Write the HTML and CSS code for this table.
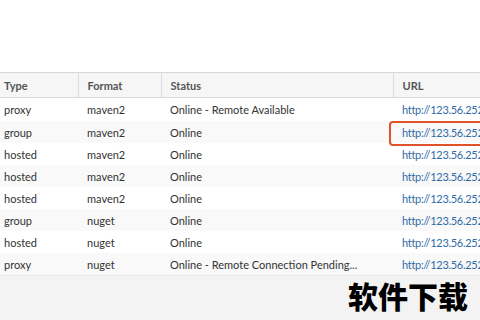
FILE: index.html
```html
<!DOCTYPE html>
<html lang="en">
<head>
  <meta charset="UTF-8" />
  <title>Repositories</title>
  <link rel="stylesheet" href="styles.css">
</head>
<body>

  <div class="topspace"></div>

  <div class="grid-wrap">
    <table class="repos">
      <colgroup>
        <col class="c-type">
        <col class="c-format">
        <col class="c-status">
        <col class="c-url">
      </colgroup>
      <thead>
        <tr>
          <th>Type</th>
          <th>Format</th>
          <th>Status</th>
          <th>URL</th>
        </tr>
      </thead>
      <tbody>
        <tr><td>proxy</td><td>maven2</td><td>Online - Remote Available</td><td class="url">http://123.56.252.18:8081/repository/maven-central/</td></tr>
        <tr><td>group</td><td>maven2</td><td>Online</td><td class="url picked"><span class="mark"></span>http://123.56.252.18:8081/repository/maven-public/</td></tr>
        <tr><td>hosted</td><td>maven2</td><td>Online</td><td class="url">http://123.56.252.18:8081/repository/maven-releases/</td></tr>
        <tr><td>hosted</td><td>maven2</td><td>Online</td><td class="url">http://123.56.252.18:8081/repository/maven-snapshots/</td></tr>
        <tr><td>hosted</td><td>maven2</td><td>Online</td><td class="url">http://123.56.252.18:8081/repository/thirdparty/</td></tr>
        <tr><td>group</td><td>nuget</td><td>Online</td><td class="url">http://123.56.252.18:8081/repository/nuget-group/</td></tr>
        <tr><td>hosted</td><td>nuget</td><td>Online</td><td class="url">http://123.56.252.18:8081/repository/nuget-hosted/</td></tr>
        <tr><td>proxy</td><td>nuget</td><td>Online - Remote Connection Pending...</td><td class="url">http://123.56.252.18:8081/repository/nuget.org-proxy/</td></tr>
      </tbody>
    </table>
  </div>

  <div class="watermark">软件下载</div>

</body>
</html>
```

FILE: styles.css
```css
body {
  margin: 0;
  width: 480px;
  height: 320px;
  overflow: hidden;
  background: #f3f3f3;
  font-family: Lato, "Open Sans", sans-serif;
  color: #333;
}

.topspace {
  height: 72px;
  background: #fff;
}

.grid-wrap {
  width: 480px;
  overflow: hidden;
}

.repos {
  table-layout: fixed;
  width: 620px;
  margin-left: -5px;
  border-collapse: collapse;
  font-size: 11px;
}

.c-type { width: 83px; }
.c-format { width: 83px; }
.c-status { width: 232px; }
.c-url { width: 222px; }

.repos th {
  height: 24px;
  padding: 0 9px;
  text-align: left;
  font-weight: 700;
  color: #555;
  background: #f6f6f6;
  border-top: 1px solid #d8d8d8;
  border-bottom: 1px solid #d8d8d8;
  border-left: 1px solid #dcdcdc;
}

.repos th:first-child {
  border-left: none;
}

.repos td {
  height: 22px;
  padding: 0 9px;
  white-space: nowrap;
  background: #fff;
}

.repos tbody tr:first-child td {
  height: 23px;
}

.repos tbody tr:nth-child(even) td {
  background: #f9f9f9;
}

.repos tbody tr:last-child td {
  border-bottom: 1px solid #e6e6e6;
}

.url {
  color: #2f6aa8;
  letter-spacing: -0.3px;
}

.picked {
  position: relative;
}

.mark {
  position: absolute;
  left: -4px;
  top: 0;
  width: 140px;
  height: 21px;
  border: 2px solid #e0522a;
  border-radius: 4px;
}

.watermark {
  text-align: right;
  padding: 1px 12px 0 0;
  font-family: "Noto Sans CJK SC", sans-serif;
  font-weight: 900;
  font-size: 30px;
  line-height: 36px;
  color: #000;
}
```
